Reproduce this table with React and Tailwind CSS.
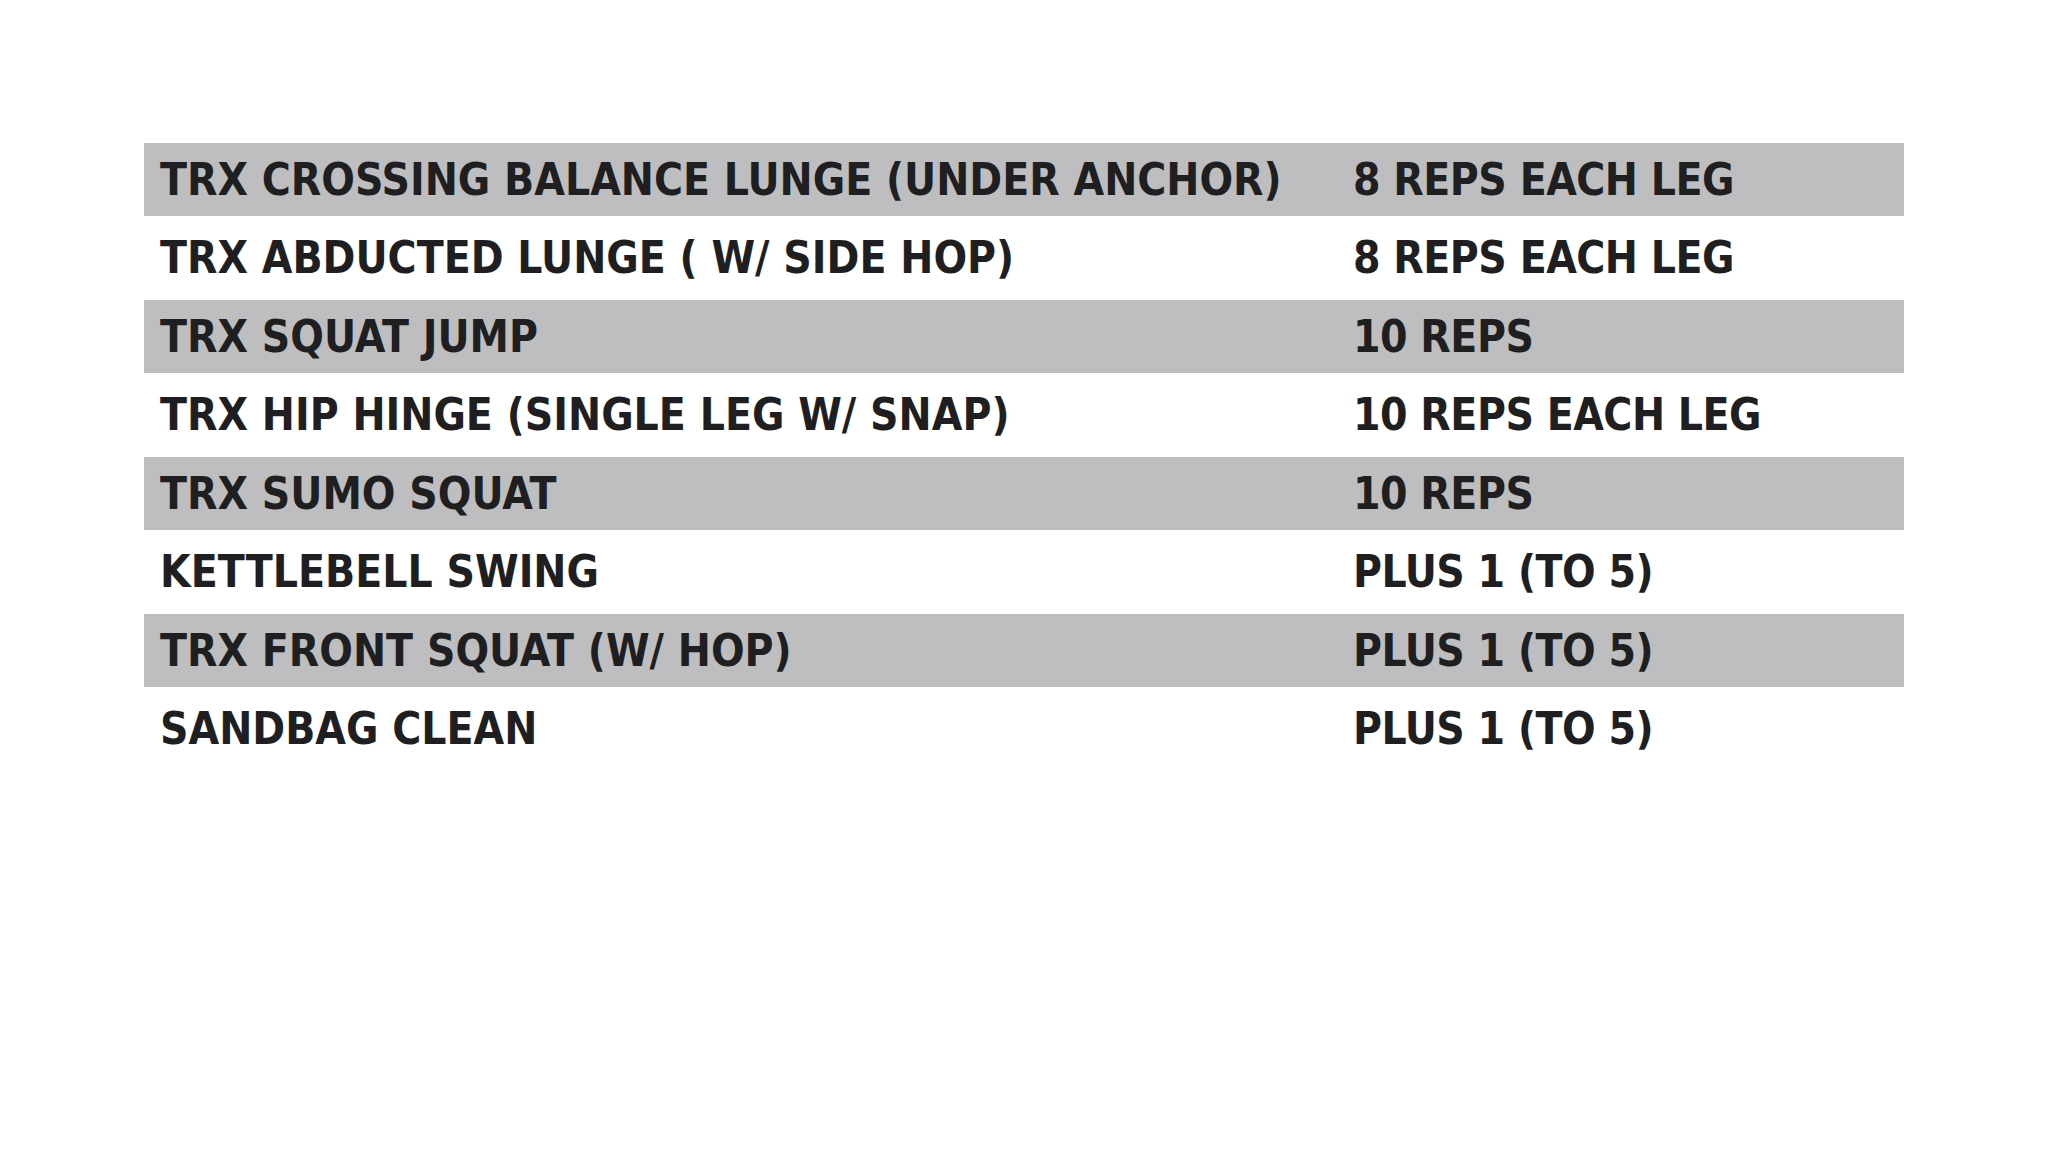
const rows = [
  ["TRX CROSSING BALANCE LUNGE (UNDER ANCHOR)", "8 REPS EACH LEG"],
  ["TRX ABDUCTED LUNGE ( W/ SIDE HOP)", "8 REPS EACH LEG"],
  ["TRX SQUAT JUMP", "10 REPS"],
  ["TRX HIP HINGE (SINGLE LEG W/ SNAP)", "10 REPS EACH LEG"],
  ["TRX SUMO SQUAT", "10 REPS"],
  ["KETTLEBELL SWING", "PLUS 1 (TO 5)"],
  ["TRX FRONT SQUAT (W/ HOP)", "PLUS 1 (TO 5)"],
  ["SANDBAG CLEAN", "PLUS 1 (TO 5)"],
];

export default function App() {
  return (
    <div className="w-[2048px] h-[1154px] bg-white pt-[143px] pl-[144px]">
      <div
        className="w-[1760px] flex flex-col text-[#1f1f21] text-[44px] font-bold leading-none"
        style={{ fontFamily: '"DejaVu Sans Condensed", "DejaVu Sans", sans-serif' }}
      >
        {rows.map(([name, reps], i) => (
          <div
            key={i}
            className={
              i % 2 === 0
                ? "flex items-center h-[73px] bg-[#bebec0]"
                : "flex items-center h-[84px] bg-white"
            }
          >
            <div className="w-[1209px] pl-[16px] whitespace-nowrap">{name}</div>
            <div className="flex-1 whitespace-nowrap tracking-[-0.5px]">{reps}</div>
          </div>
        ))}
      </div>
    </div>
  );
}
